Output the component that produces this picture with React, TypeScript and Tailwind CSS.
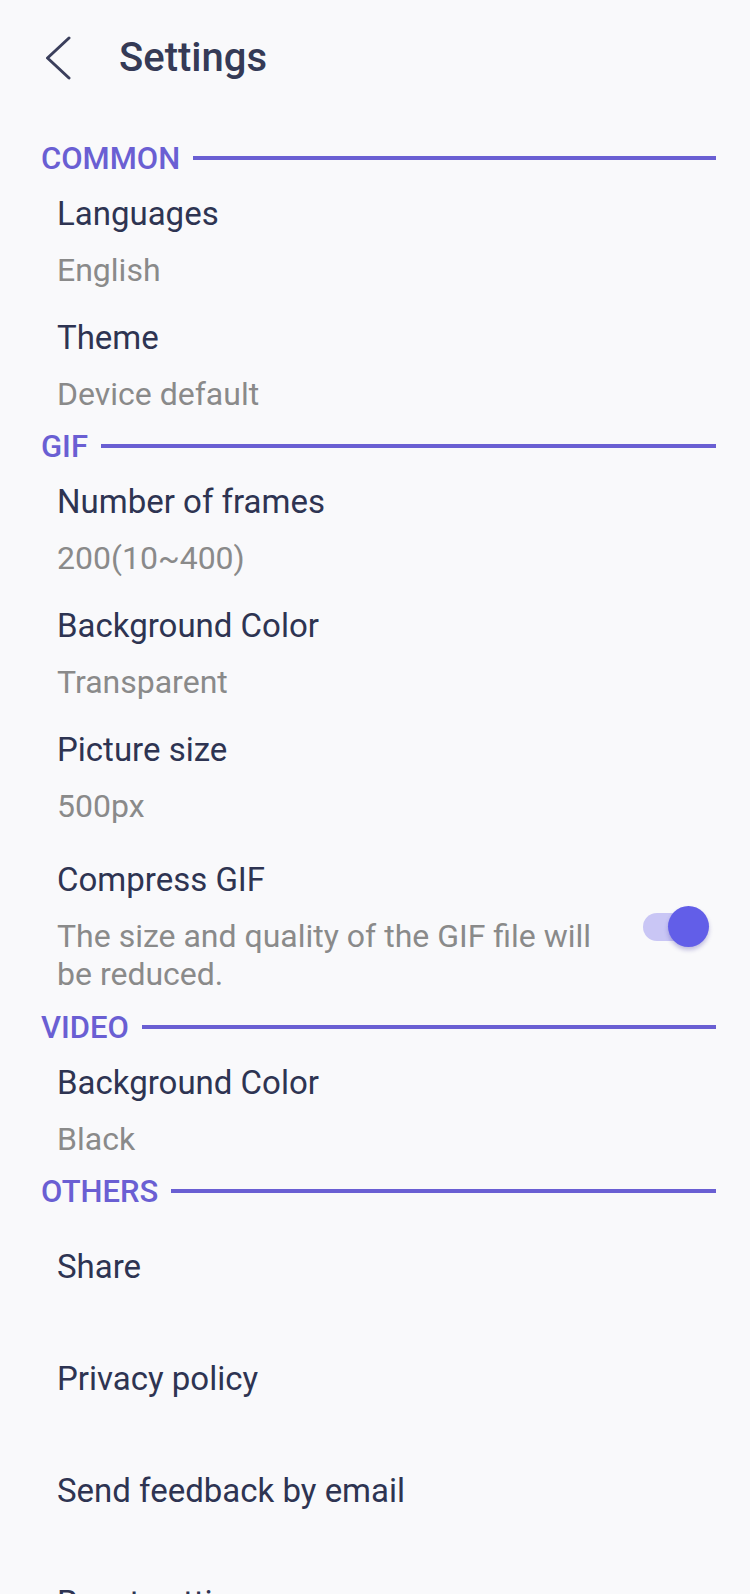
import { useState } from "react";

type Item = { title: string; value: string };

const sections: { label: string; items: Item[] }[] = [
    {
        label: "COMMON",
        items: [
            { title: "Languages", value: "English" },
            { title: "Theme", value: "Device default" },
        ],
    },
    {
        label: "GIF",
        items: [
            { title: "Number of frames", value: "200(10~400)" },
            { title: "Background Color", value: "Transparent" },
            { title: "Picture size", value: "500px" },
        ],
    },
];

const others = ["Share", "Privacy policy", "Send feedback by email", "Reset settings"];

function SectionHeader({ label }: { label: string }) {
    return (
        <div className="flex items-center h-[40px] pl-[41px] pr-[34px] gap-[13px]">
            <span className="text-[31px] font-medium leading-none text-[#6a5fd3]">{label}</span>
            <div className="flex-1 h-[4px] bg-[#6a5fd3]" />
        </div>
    );
}

function SettingRow({ title, value }: Item) {
    return (
        <div className="pl-[57px] pr-[41px] pt-[16px] pb-[13px]">
            <div className="text-[33px] leading-[40px] text-[#2e3452]">{title}</div>
            <div className="mt-[17px] text-[32px] leading-[38px] text-[#8a8a8a]">{value}</div>
        </div>
    );
}

function Toggle({ on, onChange }: { on: boolean; onChange: () => void }) {
    return (
        <button onClick={onChange} className="relative w-[66px] h-[42px] shrink-0">
            <span className={`absolute left-0 top-[7px] w-[56px] h-[28px] rounded-full ${on ? "bg-[#c9c6f5]" : "bg-[#d4d4d8]"}`} />
            <span
                className={`absolute top-0 w-[41px] h-[41px] rounded-full shadow-[0_3px_4px_rgba(60,50,160,0.3)] ${on ? "right-0 bg-[#625ee8]" : "left-0 bg-[#f4f4f5]"}`}
            />
        </button>
    );
}

export default function App() {
    const [compress, setCompress] = useState(true);

    return (
        <div className="min-h-screen bg-[#f9f9fb] font-['Roboto',sans-serif]">
            {/* top bar */}
            <div className="flex items-center h-[115px] pl-[45px]">
                <svg width="26" height="44" viewBox="0 0 26 44" fill="none">
                    <path d="M24 2L2.5 22L24 42" stroke="#3b3f5c" strokeWidth="3" strokeLinecap="round" strokeLinejoin="round" />
                </svg>
                <h1 className="ml-[48px] text-[40px] font-medium leading-none text-[#353a56]">Settings</h1>
            </div>

            <div className="pt-[23px]">
                {sections.map((s) => (
                    <div key={s.label}>
                        <SectionHeader label={s.label} />
                        {s.items.map((it) => (
                            <SettingRow key={it.title} {...it} />
                        ))}
                        {s.label === "GIF" && (
                            <div className="flex items-center pl-[57px] pr-[41px] pt-[22px] pb-[14px] gap-[30px]">
                                <div className="flex-1">
                                    <div className="text-[33px] leading-[40px] text-[#2e3452]">Compress GIF</div>
                                    <div className="mt-[17px] text-[32px] leading-[38px] text-[#8a8a8a]">
                                        The size and quality of the GIF file will be reduced.
                                    </div>
                                </div>
                                <Toggle on={compress} onChange={() => setCompress(!compress)} />
                            </div>
                        )}
                    </div>
                ))}

                <SectionHeader label="VIDEO" />
                <SettingRow title="Background Color" value="Black" />

                <SectionHeader label="OTHERS" />
                {others.map((o) => (
                    <div key={o} className="flex items-center h-[112px] pl-[57px] text-[33px] text-[#2e3452]">
                        {o}
                    </div>
                ))}
            </div>
        </div>
    );
}
